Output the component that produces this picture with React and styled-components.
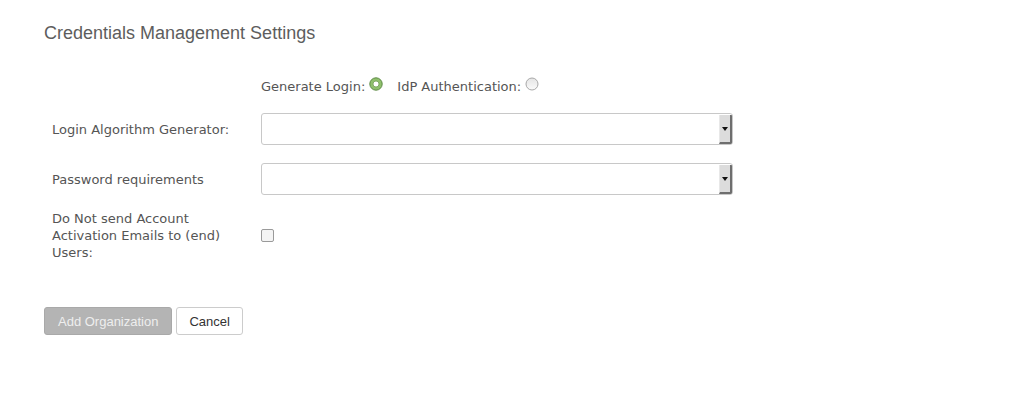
import * as React from "react";
import styled, { createGlobalStyle } from "styled-components";

const GlobalStyle = createGlobalStyle`
  body {
    margin: 0;
    background: #ffffff;
    font-family: "DejaVu Sans", sans-serif;
  }
`;

function RadioOn() {
  return (
    <svg width="14" height="14" viewBox="0 0 14 14">
      <circle cx="7" cy="7" r="6.2" fill="#8fc06c" stroke="#5f8b47" strokeWidth="1" />
      <circle cx="7" cy="7" r="3" fill="#ffffff" stroke="#6f9c52" strokeWidth="0.8" />
    </svg>
  );
}

function RadioOff() {
  return (
    <svg width="14" height="14" viewBox="0 0 14 14">
      <defs>
        <linearGradient id="rg" x1="0" y1="0" x2="0" y2="1">
          <stop offset="0" stopColor="#e4e4e4" />
          <stop offset="1" stopColor="#fbfbfb" />
        </linearGradient>
      </defs>
      <circle cx="7" cy="7" r="6" fill="url(#rg)" stroke="#a8a8a8" strokeWidth="1" />
    </svg>
  );
}

function SelectBox() {
  return (
    <Select>
      <SelectField />
      <SelectArrow>
        <svg width="6" height="4" viewBox="0 0 6 4">
          <path d="M0 0 L6 0 L3 4 Z" fill="#111" />
        </svg>
      </SelectArrow>
    </Select>
  );
}

function App() {
  return (
    <Page>
      <GlobalStyle />
      <Title>Credentials Management Settings</Title>

      <RadioRow>
        <RadioItem>
          Generate Login: <RadioOn />
        </RadioItem>
        <RadioItem>
          IdP Authentication: <RadioOff />
        </RadioItem>
      </RadioRow>

      <FormRow $gap={17}>
        <Label>Login Algorithm Generator:</Label>
        <SelectBox />
      </FormRow>

      <FormRow $gap={18}>
        <Label>Password requirements</Label>
        <SelectBox />
      </FormRow>

      <FormRow $gap={15}>
        <Label>Do Not send Account Activation Emails to (end) Users:</Label>
        <Checkbox />
      </FormRow>

      <Buttons>
        <Button $disabled>Add Organization</Button>
        <Button>Cancel</Button>
      </Buttons>
    </Page>
  );
}

const Page = styled.div`
  padding: 22px 44px 0 44px;
  width: 1019px;
  height: 418px;
  box-sizing: border-box;
`;

const Title = styled.h2`
  margin: 0;
  font: 400 18px/22px "Liberation Sans", Arial, sans-serif;
  color: #5d5d5d;
`;

const RadioRow = styled.div`
  display: flex;
  gap: 14px;
  margin: 32px 0 0 217px;
  height: 20px;
  align-items: center;
`;

const RadioItem = styled.label`
  display: flex;
  align-items: center;
  gap: 4px;
  font-size: 13px;
  color: #555;

  svg {
    position: relative;
    top: -2px;
  }
`;

const FormRow = styled.div`
  display: flex;
  align-items: center;
  margin-top: ${(p) => p.$gap}px;
  padding-left: 8px;
`;

const Label = styled.div`
  width: 209px;
  font-size: 13px;
  line-height: 17px;
  color: #555;
  padding-right: 28px;
  box-sizing: border-box;
  flex-shrink: 0;
`;

const Select = styled.div`
  width: 472px;
  height: 32px;
  box-sizing: border-box;
  border: 1px solid #c8c8c8;
  border-radius: 3px;
  background: #fff;
  display: flex;
  overflow: hidden;
`;

const SelectField = styled.div`
  flex: 1;
`;

const SelectArrow = styled.div`
  width: 13px;
  display: flex;
  align-items: center;
  justify-content: center;
  background: #dcdcdc;
  border-left: 1px solid #e8e8e8;
  border-right: 2px solid #6e6e6e;
  border-bottom: 2px solid #6e6e6e;
  margin: 1px 0 0 0;
  box-sizing: border-box;
`;

const Checkbox = styled.span`
  width: 13px;
  height: 13px;
  box-sizing: border-box;
  border: 1px solid #9a9a9a;
  border-radius: 2px;
  background: #f4f4f4;
  display: inline-block;
`;

const Buttons = styled.div`
  display: flex;
  gap: 4px;
  margin-top: 46px;
`;

const Button = styled.button`
  height: 28px;
  padding: 0 ${(p) => (p.$disabled ? 13 : 12)}px;
  border-radius: 3px;
  font: 400 13px "Liberation Sans", Arial, sans-serif;
  border: 1px solid ${(p) => (p.$disabled ? "#a9a9a9" : "#cccccc")};
  background: ${(p) => (p.$disabled ? "#b4b4b4" : "#ffffff")};
  color: ${(p) => (p.$disabled ? "#eeeeee" : "#333333")};
  cursor: ${(p) => (p.$disabled ? "default" : "pointer")};
`;

export default App;
